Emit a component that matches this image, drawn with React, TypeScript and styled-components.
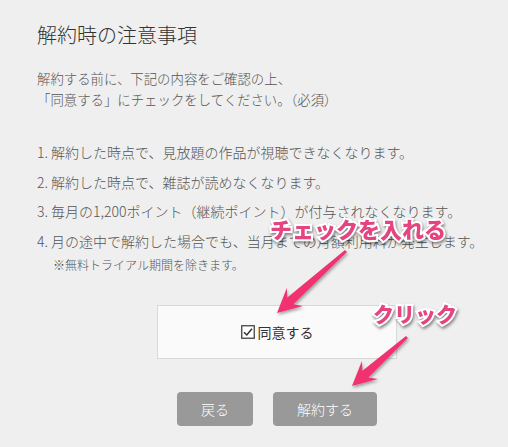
import React from "react";
import styled, { createGlobalStyle } from "styled-components";

const GlobalStyle = createGlobalStyle`
  html, body {
    margin: 0;
    padding: 0;
    background: #efefef;
    overflow: hidden;
  }
  body {
    font-family: "Noto Sans CJK JP", "Noto Sans", sans-serif;
  }
`;

const Page = styled.div`
  position: relative;
  width: 508px;
  height: 447px;
  background: #efefef;
  overflow: hidden;
`;

const Content = styled.div`
  width: 480px;
  padding: 20px 0 0 37px;
`;

const Title = styled.h1`
  margin: 0;
  font-size: 20px;
  line-height: 30px;
  font-weight: 300;
  color: #333;
`;

const Intro = styled.p`
  margin: 18px 0 0;
  font-size: 13.4px;
  line-height: 21px;
  font-weight: 300;
  color: #555;
`;

const List = styled.ol`
  list-style: none;
  margin: 28px 0 0;
  padding: 0;
`;

const Item = styled.li`
  font-size: 14px;
  line-height: 29.5px;
  font-weight: 300;
  color: #555;
`;

const Note = styled.div`
  padding-left: 16px;
  font-size: 12px;
  line-height: 18px;
  font-weight: 300;
  color: #555;
`;

const AgreeBox = styled.label`
  margin: 31px 0 0 120px;
  width: 240px;
  height: 54px;
  box-sizing: border-box;
  background: #fafafa;
  border: 1px solid #d8d8d8;
  display: flex;
  align-items: center;
  justify-content: center;
  gap: 3px;
  font-size: 14px;
  color: #333;
`;

const Buttons = styled.div`
  display: flex;
  gap: 20px;
  margin: 33px 0 0 140px;
`;

const Button = styled.button<{ $w: number }>`
  width: ${(p) => p.$w}px;
  height: 34px;
  border: none;
  border-radius: 4px;
  background: #999;
  color: #fff;
  font-family: "Noto Sans CJK JP", sans-serif;
  font-size: 14px;
  font-weight: 300;
  padding: 0;
`;

const Callout = styled.div<{ $x: number; $y: number; $size: number }>`
  position: absolute;
  left: ${(p) => p.$x}px;
  top: ${(p) => p.$y}px;
  font-size: ${(p) => p.$size}px;
  line-height: 1;
  font-weight: 900;
  color: #e4447f;
  white-space: nowrap;
  -webkit-text-stroke: 4px #fff;
  paint-order: stroke fill;
  filter: drop-shadow(1px 2px 1.5px rgba(0, 0, 0, 0.45));
`;

const Overlay = styled.svg`
  position: absolute;
  left: 0;
  top: 0;
  pointer-events: none;
`;

const CheckIcon = () => (
  <svg width="14" height="14" viewBox="0 0 14 14">
    <rect x="0.75" y="0.75" width="12.5" height="12.5" fill="#fff" stroke="#444" strokeWidth="1.3" />
    <path d="M3 7.2 L5.8 10 L11 3.8" fill="none" stroke="#333" strokeWidth="1.5" />
  </svg>
);

function arrowPoints(tx: number, ty: number, px: number, py: number) {
  const dx = px - tx;
  const dy = py - ty;
  const len = Math.hypot(dx, dy);
  const ux = dx / len;
  const uy = dy / len;
  const nx = -uy;
  const ny = ux;
  const head = 24;
  const bx = px - ux * head;
  const by = py - uy * head;
  const nb = px - ux * (head - 6);
  const nby = py - uy * (head - 6);
  const pts = [
    [tx + nx * 1.5, ty + ny * 1.5],
    [nb + nx * 4.5, nby + ny * 4.5],
    [bx + nx * 12, by + ny * 12],
    [px, py],
    [bx - nx * 12, by - ny * 12],
    [nb - nx * 4.5, nby - ny * 4.5],
    [tx - nx * 1.5, ty - ny * 1.5],
  ];
  return pts.map((p) => p.join(",")).join(" ");
}

const App = () => (
  <Page>
    <GlobalStyle />
    <Content>
      <Title>解約時の注意事項</Title>
      <Intro>
        解約する前に、下記の内容をご確認の上、
        <br />
        「同意する」にチェックをしてください。（必須）
      </Intro>
      <List>
        <Item>1. 解約した時点で、見放題の作品が視聴できなくなります。</Item>
        <Item>2. 解約した時点で、雑誌が読めなくなります。</Item>
        <Item>3. 毎月の1,200ポイント（継続ポイント）が付与されなくなります。</Item>
        <Item>4. 月の途中で解約した場合でも、当月までの月額利用料が発生します。</Item>
      </List>
      <Note>※無料トライアル期間を除きます。</Note>
      <AgreeBox>
        <CheckIcon />
        同意する
      </AgreeBox>
      <Buttons>
        <Button $w={76}>戻る</Button>
        <Button $w={104}>解約する</Button>
      </Buttons>
    </Content>

    <Overlay width="508" height="447" viewBox="0 0 508 447">
      <defs>
        <filter id="sh" x="-20%" y="-20%" width="140%" height="140%">
          <feDropShadow dx="1" dy="2" stdDeviation="1.5" floodColor="#000" floodOpacity="0.35" />
        </filter>
      </defs>
      <polygon points={arrowPoints(346, 251, 277, 313)} fill="#f0336f" filter="url(#sh)" />
      <polygon points={arrowPoints(407, 337, 352, 386)} fill="#f0336f" filter="url(#sh)" />
    </Overlay>
    <Callout $x={270} $y={217} $size={22}>チェックを入れる</Callout>
    <Callout $x={373} $y={303} $size={21}>クリック</Callout>
  </Page>
);

export default App;
